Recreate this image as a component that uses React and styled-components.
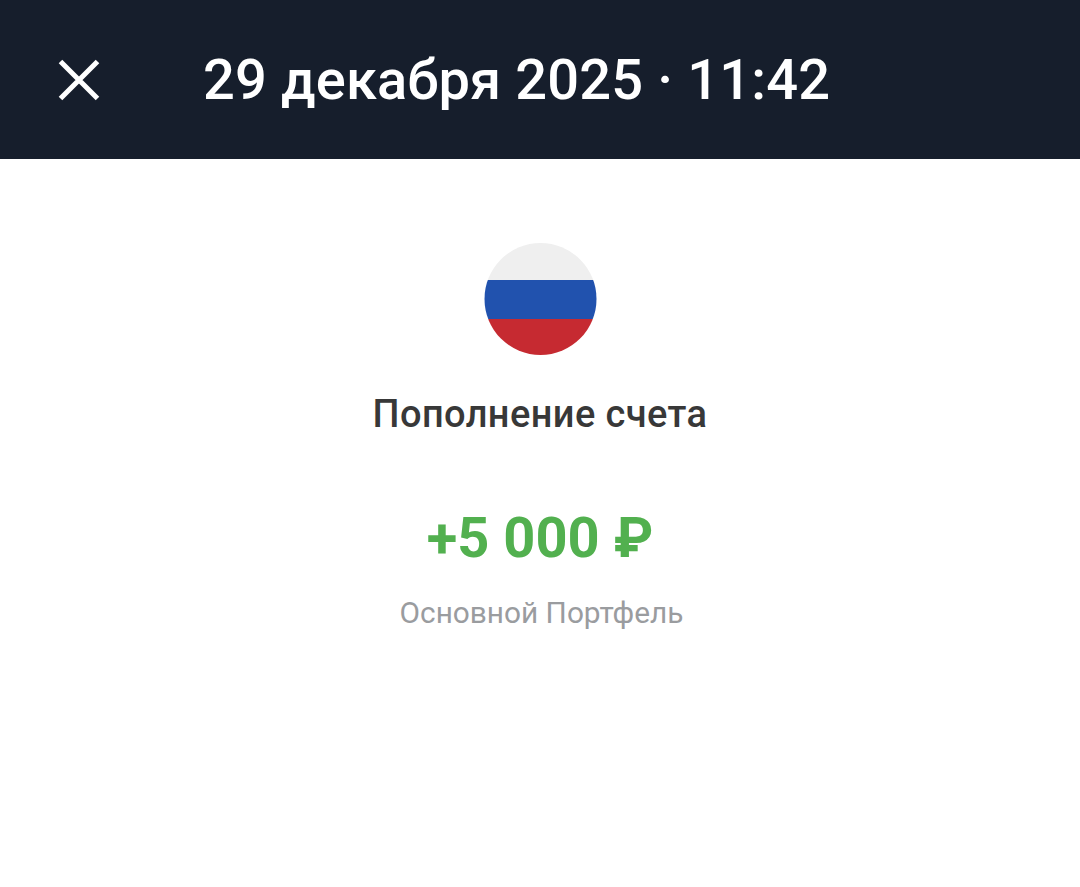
import React from "react";
import styled, { createGlobalStyle } from "styled-components";

const Global = createGlobalStyle`
  html, body { margin: 0; padding: 0; background: #fff; }
  body { font-family: Roboto, "Liberation Sans", sans-serif; }
`;

const Page = styled.div`
  width: 1080px;
  height: 887px;
  overflow: hidden;
  background: #fff;
  display: flex;
  flex-direction: column;
`;

const Header = styled.header`
  height: 159px;
  background: #161e2c;
  display: flex;
  align-items: center;
  padding-left: 58px;
  gap: 103px;
  box-sizing: border-box;
`;

const CloseButton = styled.button`
  width: 42px;
  height: 42px;
  padding: 0;
  border: 0;
  background: none;
  display: block;
`;

const Title = styled.h1`
  margin: 0;
  color: #fff;
  font-size: 56px;
  line-height: 66px;
  font-weight: 500;
  letter-spacing: 0.14px;
  white-space: nowrap;
`;

const Body = styled.main`
  display: flex;
  flex-direction: column;
  align-items: center;
  padding-top: 84px;
`;

const Flag = styled.svg`
  width: 114px;
  height: 114px;
  display: block;
`;

const Operation = styled.div`
  margin-top: 35px;
  color: #383838;
  font-size: 38px;
  line-height: 44px;
  font-weight: 500;
  letter-spacing: 0.4px;
`;

const Amount = styled.div`
  margin-top: 69px;
  color: #52b04f;
  font-size: 56px;
  line-height: 66px;
  font-weight: 700;
`;

const Account = styled.div`
  margin-top: 24px;
  padding-left: 3px;
  color: #9a9c9f;
  font-size: 29.8px;
  line-height: 36px;
  font-weight: 400;
`;

export default function App() {
  return (
    <Page>
      <Global />
      <Header>
        <CloseButton aria-label="Закрыть">
          <svg width="42" height="42" viewBox="0 0 42 42" fill="none">
            <path d="M2.5 2.5 L39.5 39.5 M39.5 2.5 L2.5 39.5" stroke="#fff" strokeWidth="5" />
          </svg>
        </CloseButton>
        <Title>29 декабря 2025 · 11:42</Title>
      </Header>
      <Body>
        <Flag viewBox="0 0 114 114">
          <defs>
            <clipPath id="flag-circle">
              <circle cx="57.5" cy="56" r="56" />
            </clipPath>
          </defs>
          <g clipPath="url(#flag-circle)">
            <rect x="0" y="0" width="114" height="37" fill="#efefef" />
            <rect x="0" y="37" width="114" height="39" fill="#2152ae" />
            <rect x="0" y="76" width="114" height="38" fill="#c62a31" />
          </g>
        </Flag>
        <Operation>Пополнение счета</Operation>
        <Amount>+5 000 ₽</Amount>
        <Account>Основной Портфель</Account>
      </Body>
    </Page>
  );
}
